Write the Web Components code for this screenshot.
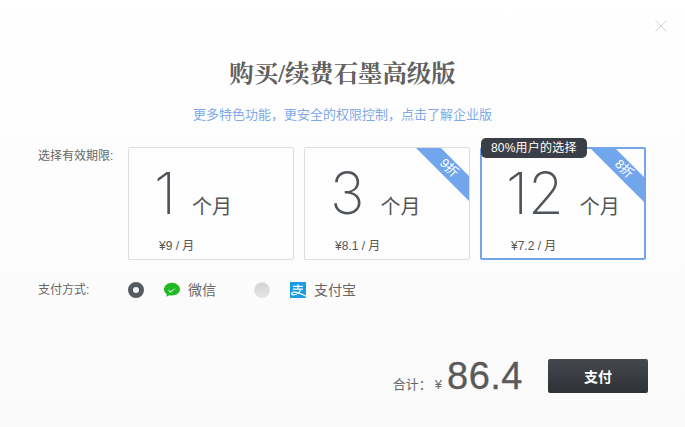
<!DOCTYPE html>
<html lang="zh">
<head>
<meta charset="utf-8">
<title>购买/续费石墨高级版</title>
<style>
    html, body { margin: 0; padding: 0; height: 100%; }
    body {
        font-family: "Liberation Sans", "Noto Sans CJK SC", sans-serif;
        color: #555;
    }
</style>
</head>
<body>

<buy-dialog>
    <plan-card slot="plans" months="1" price="¥9 / 月"></plan-card>
    <plan-card slot="plans" months="3" price="¥8.1 / 月" discount="9折"></plan-card>
    <plan-card slot="plans" months="12" price="¥7.2 / 月" discount="8折" badge="80%用户的选择" selected></plan-card>

    <pay-option slot="methods" selected>
        <svg slot="icon" width="16" height="16" viewBox="0 0 16 16">
            <path d="M8 .8C3.600.8 0 3.700 0 7.300c0 2 1.100 3.700 2.800 4.900l-.5 2.600 3-1.600c.8.200 1.800.3 2.700.3 4.400 0 8-2.800 8-6.200S12.400.800 8 .800z" fill="#1fb922"/>
            <path d="M3.800 7.200l2.600 2.100 6.200-3.700-6 5c-.3.200-.6.100-.8-.1z" fill="#fff"/>
        </svg>
        微信
    </pay-option>
    <pay-option slot="methods">
        <svg slot="icon" width="16" height="16" viewBox="0 0 16 16">
            <rect width="16" height="16" fill="#1b9ae6"/>
            <path d="M3 4.300h10M8 2.200v4.500M2.800 7.100h10.200M10.800 7.100C9.800 10.500 6.500 13 2.800 12.800c-1.600-.1-1.600-2.500.8-2.700 3-.2 6.500 1 12.400 4" fill="none" stroke="#fff" stroke-width="1.200"/>
        </svg>
        支付宝
    </pay-option>
</buy-dialog>

<script>
const dialogTpl = document.createElement("template");
dialogTpl.innerHTML = `
    <style>
        :host {
            display: flex;
            flex-direction: column;
            height: 427px;
            box-sizing: border-box;
            background: linear-gradient(#fff, #fafafa);
        }
        .close {
            align-self: flex-end;
            width: 12px;
            height: 12px;
            margin: 20px 18px 0 0;
        }
        h1 {
            margin: 20px 0 0;
            text-align: center;
            font: bold 24.4px/44px "Liberation Serif", "Noto Serif CJK SC", "Noto Sans CJK SC", serif;
            color: #606060;
        }
        .sub {
            margin: 9px 0 0;
            text-align: center;
            font-size: 13px;
            line-height: 20px;
            color: #7eaae8;
        }
        .row {
            display: flex;
            padding-left: 38px;
            font-size: 12px;
            color: #666;
        }
        .row .label { width: 90px; flex: none; line-height: 18px; }
        .plans { margin-top: 22px; }
        .plans .list { display: flex; gap: 10px; }
        .methods { margin-top: 20px; align-items: center; }
        .methods .list { display: flex; gap: 38px; }
        .footer {
            display: flex;
            align-items: flex-end;
            justify-content: flex-end;
            margin-top: auto;
            padding: 0 37px 34px 0;
        }
        .total { display: flex; align-items: baseline; margin-right: 25px; color: #666; }
        .total .cap { font-size: 13px; }
        .total .yen { font-size: 13px; margin: 0 5px 0 3px; }
        .total .num {
            font-size: 38px;
            line-height: 34px;
            letter-spacing: .5px;
            color: #5a5a5a;
            -webkit-text-stroke: .3px #5a5a5a;
        }
        button {
            width: 100px;
            height: 34px;
            padding: 0;
            border: 0;
            border-radius: 2px;
            background: linear-gradient(#45484e, #2e3136);
            color: #fff;
            font: bold 14px "Liberation Sans", "Noto Sans CJK SC", sans-serif;
        }
    </style>
    <svg class="close" viewBox="0 0 12 12"><path d="M.5.500l11 11M11.500.500l-11 11" stroke="#c8c8c8" stroke-width=".8" fill="none"/></svg>
    <h1>购买/续费石墨高级版</h1>
    <p class="sub">更多特色功能，更安全的权限控制，点击了解企业版</p>
    <div class="row plans">
        <div class="label">选择有效期限:</div>
        <div class="list"><slot name="plans"></slot></div>
    </div>
    <div class="row methods">
        <div class="label">支付方式:</div>
        <div class="list"><slot name="methods"></slot></div>
    </div>
    <div class="footer">
        <div class="total">
            <span class="cap">合计：</span><span class="yen">¥</span><span class="num">86.4</span>
        </div>
        <button>支付</button>
    </div>
`;

class BuyDialog extends HTMLElement {
    constructor() {
        super();
        this.attachShadow({ mode: "open" });
        this.shadowRoot.append(dialogTpl.content.cloneNode(true));
    }
}

const planTpl = document.createElement("template");
planTpl.innerHTML = `
    <style>
        :host {
            display: block;
            position: relative;
            box-sizing: border-box;
            width: 166px;
            height: 113px;
            padding: 15px 0 0 25px;
            border: 1px solid #ddd;
            border-radius: 2px;
            background: #fefefe;
        }
        :host([selected]) { border: 2px solid #74a5e8; padding: 14px 0 0 24px; }
        .term { display: flex; align-items: baseline; color: #4f535a; }
        .num {
            font: 200 58px/60px Inter, Roboto, "Liberation Sans", sans-serif;
            margin-right: 16px;
        }
        .unit { font-size: 20px; line-height: 24px; color: #555; }
        .price { margin: 15px 0 0 5px; font-size: 12px; line-height: 16px; color: #555; }
        .ribbon {
            position: absolute;
            top: 0;
            right: 0;
            width: 53px;
            height: 53px;
            background: #72a6ec;
            clip-path: polygon(0 0, 25px 0, 100% 28px, 100% 100%);
        }
        .ribbon span {
            position: absolute;
            left: 21px;
            top: 13px;
            width: 24px;
            text-align: center;
            transform: rotate(45deg);
            font-size: 13px;
            line-height: 14px;
            color: #fff;
        }
        .badge {
            position: absolute;
            left: -1px;
            top: -11px;
            height: 20px;
            padding: 0 10px;
            border-radius: 5px;
            background: #3a3f47;
            color: #fff;
            font-size: 12px;
            letter-spacing: .2px;
            line-height: 20px;
            white-space: nowrap;
        }
    </style>
    <div class="term"><span class="num"></span><span class="unit">个月</span></div>
    <div class="price"></div>
`;

class PlanCard extends HTMLElement {
    constructor() {
        super();
        this.attachShadow({ mode: "open" });
        this.shadowRoot.append(planTpl.content.cloneNode(true));
    }

    connectedCallback() {
        const root = this.shadowRoot;
        root.querySelector(".num").textContent = this.getAttribute("months");
        root.querySelector(".price").textContent = this.getAttribute("price");

        if (this.hasAttribute("discount")) {
            const ribbon = document.createElement("div");
            ribbon.className = "ribbon";
            const label = document.createElement("span");
            label.textContent = this.getAttribute("discount");
            ribbon.append(label);
            root.append(ribbon);
        }
        if (this.hasAttribute("badge")) {
            const badge = document.createElement("div");
            badge.className = "badge";
            badge.textContent = this.getAttribute("badge");
            root.append(badge);
        }
    }
}

const optionTpl = document.createElement("template");
optionTpl.innerHTML = `
    <style>
        :host {
            display: flex;
            align-items: center;
            font-size: 14px;
            line-height: 20px;
            color: #666;
        }
        .radio {
            box-sizing: border-box;
            width: 16px;
            height: 16px;
            margin-right: 20px;
            border-radius: 50%;
            border: 1px solid #e2e2e2;
            background: linear-gradient(#d4d4d4, #e4e4e4);
        }
        :host([selected]) .radio {
            border: 5px solid #565a61;
            background: #f4f4f4;
        }
        .icon { display: flex; margin-right: 8px; }
    </style>
    <span class="radio"></span>
    <span class="icon"><slot name="icon"></slot></span>
    <slot></slot>
`;

class PayOption extends HTMLElement {
    constructor() {
        super();
        this.attachShadow({ mode: "open" });
        this.shadowRoot.append(optionTpl.content.cloneNode(true));
    }
}

customElements.define("buy-dialog", BuyDialog);
customElements.define("plan-card", PlanCard);
customElements.define("pay-option", PayOption);
</script>
</body>
</html>
